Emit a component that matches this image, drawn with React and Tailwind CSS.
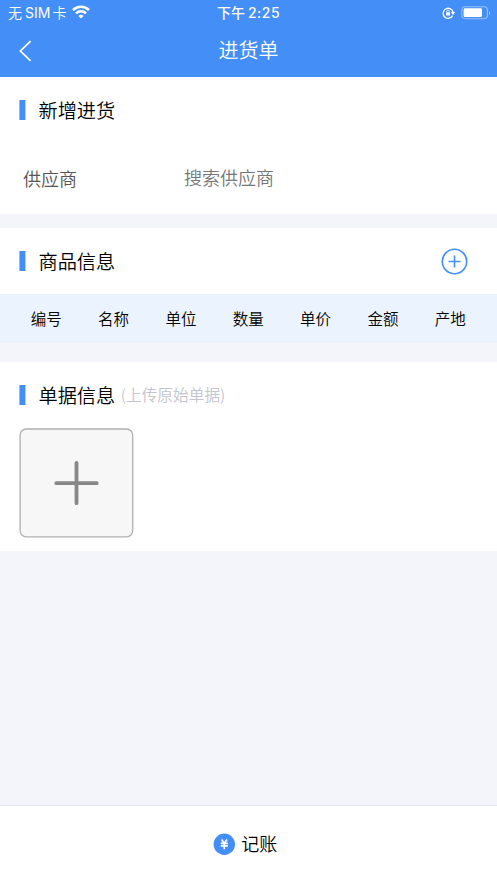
import React from "react";

const columns = ['编号', '名称', '单位', '数量', '单价', '金额', '产地']

const StatusBar = () => {
    return (
        <div className="h-[26px] grid grid-cols-3 items-center pl-[8px] pr-[6px]">
            <div className="h-[26px] flex items-center text-[14px] leading-[26px] font-[350] whitespace-nowrap">
                <span className="-mt-[2px]">无</span>
                <span className="ml-[3px] font-['Inter'] font-normal text-[14px]">SIM</span>
                <span className="ml-[2px] -mt-[2px]">卡</span>
                <svg width="18" height="14" viewBox="0 0 18 14" className="ml-[6px] -mt-[2px]" fill="none" stroke="currentColor" strokeWidth="2.6">
                    <path d="M1 5.1a11.4 11.4 0 0 1 16 0" />
                    <path d="M4 8.3a7.1 7.1 0 0 1 10 0" />
                    <path d="M9 13.6 6.4 11a3.7 3.7 0 0 1 5.2 0Z" fill="currentColor" stroke="none" />
                </svg>
            </div>
            <div className="h-[26px] flex items-center justify-center -ml-[2px] text-[14px] leading-[26px] whitespace-nowrap">
                <span className="-mt-[2px] font-medium">下午</span>
                <span className="ml-[3px] font-['Inter'] font-medium text-[14px] tracking-[0.5px]">2:25</span>
            </div>
            <div className="flex items-center justify-end">
                <svg width="14" height="12" viewBox="0 0 14 12" fill="none" stroke="currentColor">
                    <path d="M10.6 8.6A5 5 0 1 1 11 5" strokeWidth="1.3" />
                    <path d="M8.8 5h4.4L11 7.9Z" fill="currentColor" stroke="none" />
                    <rect x="4" y="5.3" width="4" height="3.3" rx=".4" fill="currentColor" stroke="none" />
                    <path d="M4.8 5.4V4.3a1.2 1.2 0 0 1 2.4 0v1.1" strokeWidth=".8" />
                </svg>
                <svg width="30" height="14" viewBox="0 0 30 14" className="ml-[5px] -mt-[1px]" fill="none">
                    <rect x=".8" y=".7" width="25.6" height="12" rx="3.4" stroke="#fff" strokeOpacity=".45" strokeWidth="1.1" />
                    <rect x="2.6" y="2.3" width="18.4" height="8.8" rx="1.4" fill="#fff" />
                    <path d="M28 5v4.2c1.6-.6 1.6-3.6 0-4.2Z" fill="#fff" fillOpacity=".5" />
                </svg>
            </div>
        </div>
    )
}

const SectionTitle = ({ title, hint }) => {
    return (
        <div className="h-[28px] flex items-center">
            <svg width="7" height="20" viewBox="0 0 7 20">
                <rect x=".4" width="6" height="20" fill="#448ef7" />
            </svg>
            <h3 className="ml-[12.5px] -mt-[1px] text-[19.2px] leading-[28px] font-[350] text-black">{title}</h3>
            {hint && <span className="ml-[5.5px] -mt-[1px] text-[15.7px] leading-[28px] font-[350] text-[#c3c5ce]">{hint}</span>}
        </div>
    )
}

const App = () => {
    return (
        <div className="w-full h-[883px] flex flex-col bg-[#f4f5fa] font-['Noto_Sans_CJK_SC',sans-serif]">
            <header className="h-[77px] bg-[#448ef7] text-white">
                <StatusBar />
                <div className="h-[51px] grid grid-cols-3 items-center">
                    <svg width="14" height="22" viewBox="0 0 14 22" className="ml-[18px] -mt-[1px]" fill="none" stroke="currentColor" strokeWidth="1.7">
                        <path d="M12.6 1.2 2.4 11l10.2 9.8" />
                    </svg>
                    <h1 className="text-center text-[20px] leading-[28px] font-[350] -mt-[4px]">进货单</h1>
                </div>
            </header>

            <section className="h-[137px] bg-white pt-[19px] px-[19px]">
                <SectionTitle title="新增进货" />
                <div className="h-[28px] flex items-center mt-[40px] pl-[4px] text-[18px] leading-[28px] font-[350]">
                    <span className="w-[161px] text-[#555]">供应商</span>
                    <span className="-mt-[2px] text-[#777]">搜索供应商</span>
                </div>
            </section>

            <section className="mt-[14px] bg-white">
                <div className="h-[66px] flex items-center justify-between pl-[19px] pr-[29px]">
                    <SectionTitle title="商品信息" />
                    <svg width="27" height="27" viewBox="0 0 27 27" fill="none" stroke="#448ef7" strokeWidth="1.6">
                        <circle cx="13.5" cy="13.5" r="12.2" />
                        <path d="M7.5 13.5h12M13.5 7.5v12" />
                    </svg>
                </div>
                <div className="h-[49px] grid grid-cols-7 items-center pl-[12.5px] pr-[13px] bg-[#ebf4fe] text-center text-[15.5px] font-[350] text-black">
                    {columns.map(el => (
                        <span key={el}>{el}</span>
                    ))}
                </div>
            </section>

            <section className="h-[189px] mt-[19px] bg-white pt-[19px] pl-[19px]">
                <SectionTitle title="单据信息" hint="(上传原始单据)" />
                <svg width="115" height="110" viewBox="0 0 115 110" className="mt-[19px]" fill="none">
                    <rect x="1.1" y="1" width="112.6" height="107.8" rx="6" fill="#f7f7f7" stroke="#b0b0b0" strokeWidth="1.3" />
                    <path d="M37.3 55.2h40.4M57.5 35v40.2" stroke="#888" strokeWidth="3.8" strokeLinecap="round" />
                </svg>
            </section>

            <footer className="h-[78px] mt-auto flex items-center justify-center pr-[7px] border-t border-[#e6e7ea] bg-white">
                <svg width="22" height="22" viewBox="0 0 22 22" className="-mt-[1px]" fill="none">
                    <circle cx="11.3" cy="11.3" r="10.7" fill="#448ef7" />
                    <path d="m8.6 6.6 2.7 3.7L14 6.6M7.7 10.3h7.2M7.7 12.9h7.2M11.3 10.3v6" stroke="#fff" strokeWidth="1.7" />
                </svg>
                <span className="ml-[6.5px] -mt-[3px] text-[18px] leading-[28px] font-[350] text-black">记账</span>
            </footer>
        </div>
    )
}

export default App
